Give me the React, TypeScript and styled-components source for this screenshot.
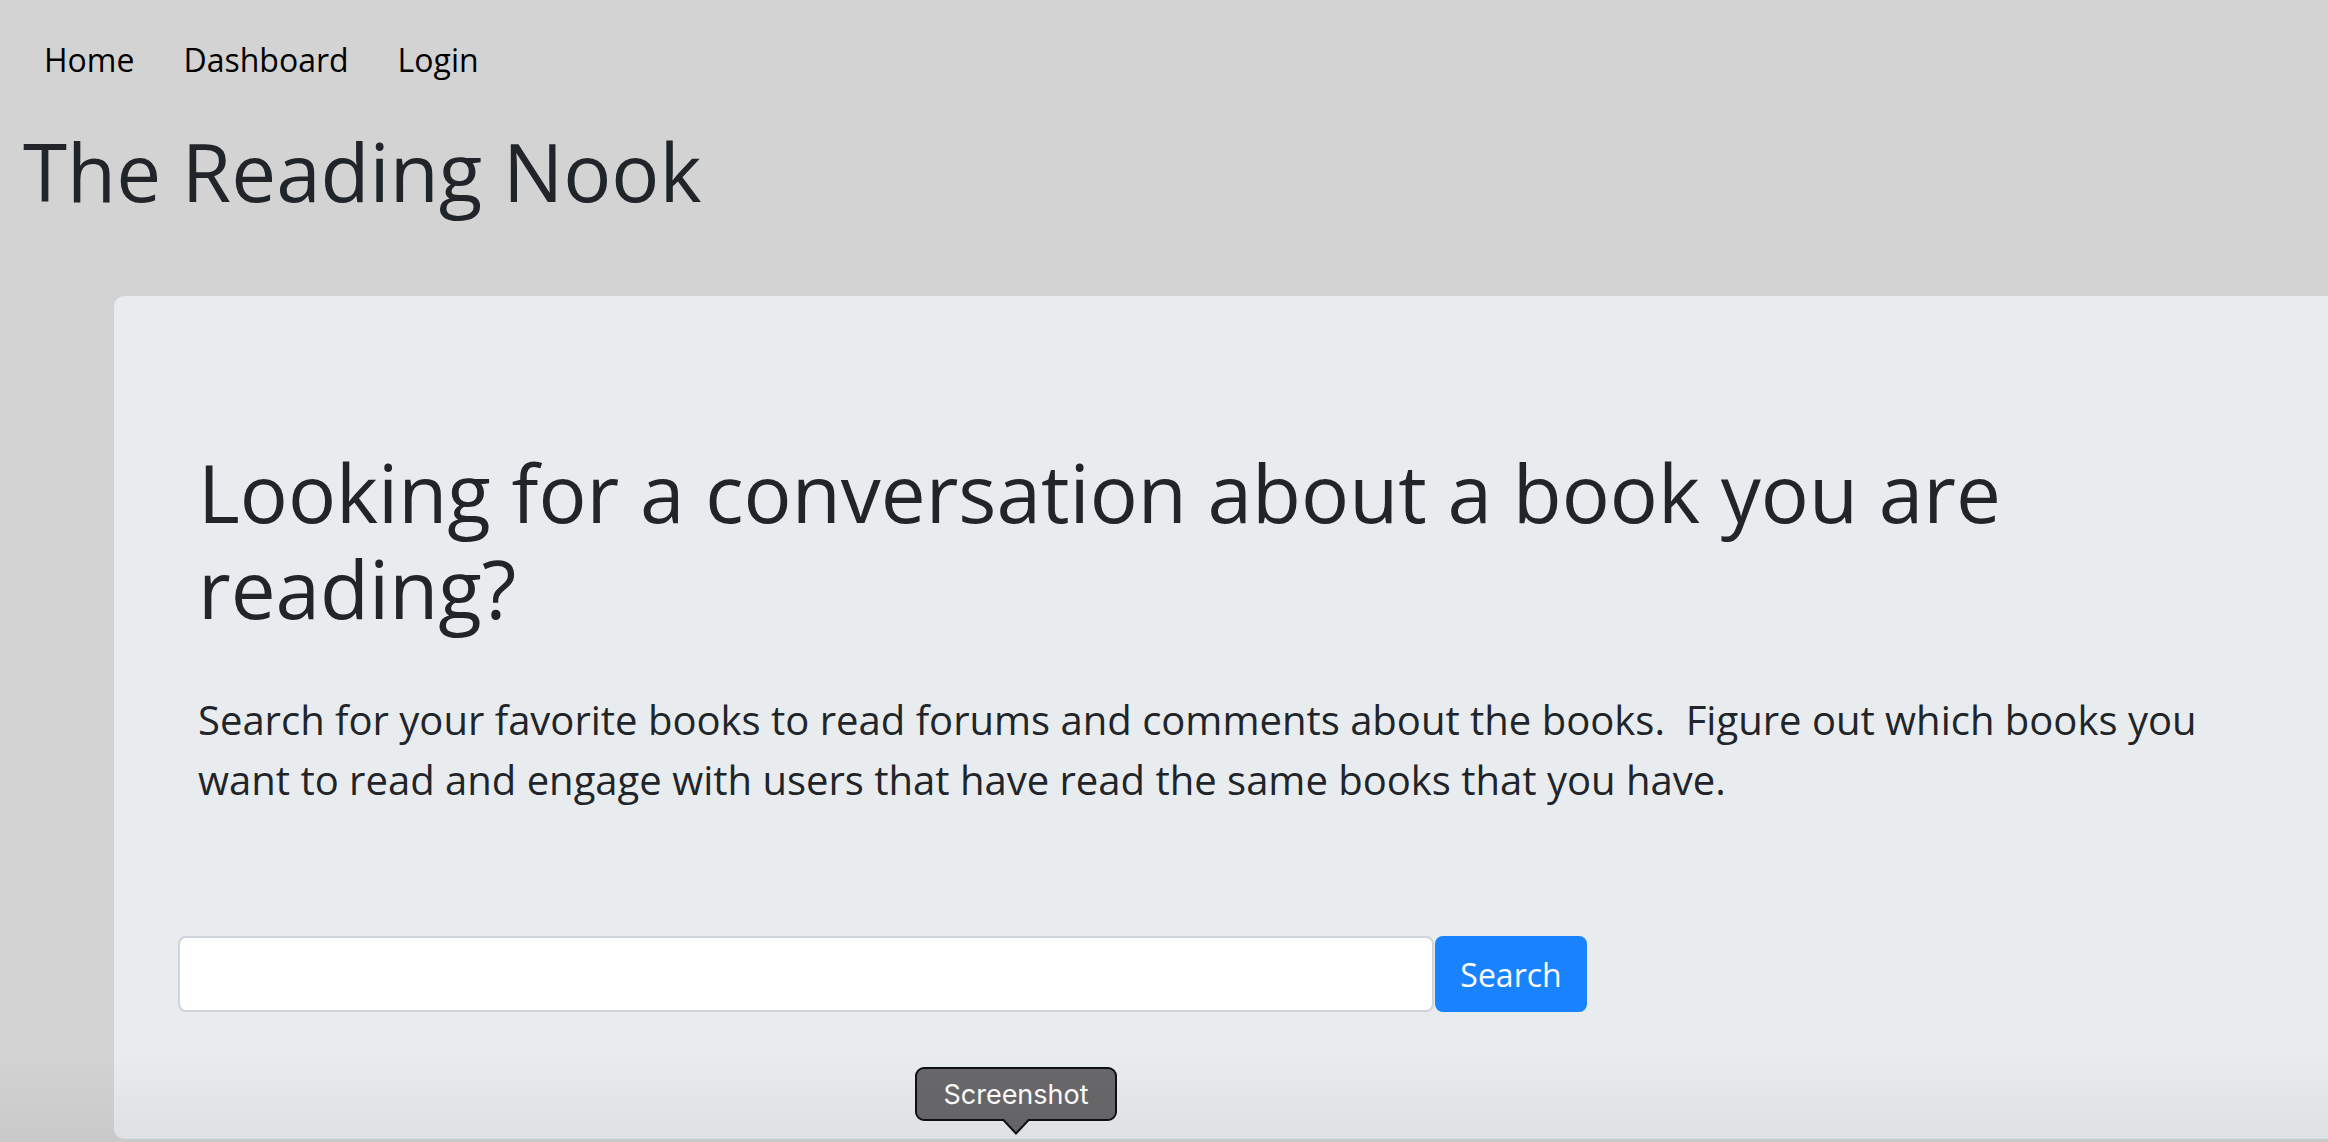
import React from 'react'
import styled, {createGlobalStyle} from 'styled-components'

const GlobalStyle = createGlobalStyle`
  html, body {
    margin: 0;
    padding: 0;
    background: #d3d3d3;
    font-family: "Open Sans", "DejaVu Sans", sans-serif;
    color: #212529;
    overflow: hidden;
  }

  body::after {
    content: '';
    position: fixed;
    left: 0;
    right: 0;
    bottom: 0;
    height: 90px;
    pointer-events: none;
    background: linear-gradient(to bottom, rgba(0, 0, 0, 0), rgba(0, 0, 0, 0.045));
  }
`

const Page = styled.div`
  position: relative;
  min-height: 1142px;
`

const NavBar = styled.nav`
  display: flex;
  gap: 49px;
  padding: 36px 0 0 44px;
`

const NavLink = styled.a`
  font-size: 32px;
  line-height: 48px;
  color: #000;
  text-decoration: none;
  cursor: pointer;
`

const SiteTitle = styled.h1`
  margin: 39px 0 0;
  padding-left: 23px;
  font-size: 80px;
  font-weight: 400;
  line-height: 96px;
  color: #212529;
`

const Jumbotron = styled.section`
  margin: 77px 0 0 114px;
  padding: 148px 0 127px 64px;
  background: #e9ecef;
  border-radius: 10px 0 0 10px;
`

const Intro = styled.div`
  width: 2060px;
  padding-left: 20px;
`

const Heading = styled.h1`
  margin: 0;
  font-size: 80px;
  font-weight: 400;
  line-height: 96px;
`

const Lead = styled.p`
  margin: 54px 0 0;
  font-size: 40px;
  font-weight: 400;
  line-height: 60px;
`

const SearchForm = styled.form`
  display: flex;
  gap: 1px;
  margin-top: 126px;
`

const SearchInput = styled.input`
  box-sizing: border-box;
  width: 1256px;
  height: 76px;
  padding: 0 24px;
  border: 2px solid #ced4da;
  border-radius: 8px;
  background: #fff;
  font: inherit;
  font-size: 32px;
  outline: none;
`

const SearchButton = styled.button`
  box-sizing: border-box;
  width: 152px;
  height: 76px;
  border: none;
  border-radius: 8px;
  background: #1982ff;
  color: #fff;
  font-family: inherit;
  font-size: 32px;
  cursor: pointer;
`

const Tooltip = styled.div`
  position: absolute;
  left: 915px;
  top: 1067px;
  box-sizing: border-box;
  width: 202px;
  height: 54px;
  display: flex;
  align-items: center;
  justify-content: center;
  background: #69686b;
  border: 2px solid #111;
  border-radius: 9px;
  color: #fff;
  font-family: Inter, "Liberation Sans", sans-serif;
  font-size: 27px;

  &::before,
  &::after {
    content: '';
    position: absolute;
    left: 50%;
    width: 0;
    height: 0;
    transform: translateX(-50%);
    border-style: solid;
  }

  &::before {
    top: 100%;
    border-width: 16px 15px 0 15px;
    border-color: #111 transparent transparent transparent;
  }

  &::after {
    top: calc(100% - 1px);
    border-width: 14px 13px 0 13px;
    border-color: #69686b transparent transparent transparent;
  }
`

export default function App() {
  return (
    <Page>
      <GlobalStyle />
      <NavBar>
        <NavLink>Home</NavLink>
        <NavLink>Dashboard</NavLink>
        <NavLink>Login</NavLink>
      </NavBar>
      <SiteTitle>The Reading Nook</SiteTitle>
      <Jumbotron>
        <Intro>
          <Heading>Looking for a conversation about a book you are reading?</Heading>
          <Lead>
            Search for your favorite books to read forums and comments about the books.{'\u00a0'} Figure
            out which books you want to read and engage with users that have read the same books that
            you have.
          </Lead>
        </Intro>
        <SearchForm onSubmit={e => e.preventDefault()}>
          <SearchInput type="text" />
          <SearchButton type="submit">Search</SearchButton>
        </SearchForm>
      </Jumbotron>
      <Tooltip>Screenshot</Tooltip>
    </Page>
  )
}
